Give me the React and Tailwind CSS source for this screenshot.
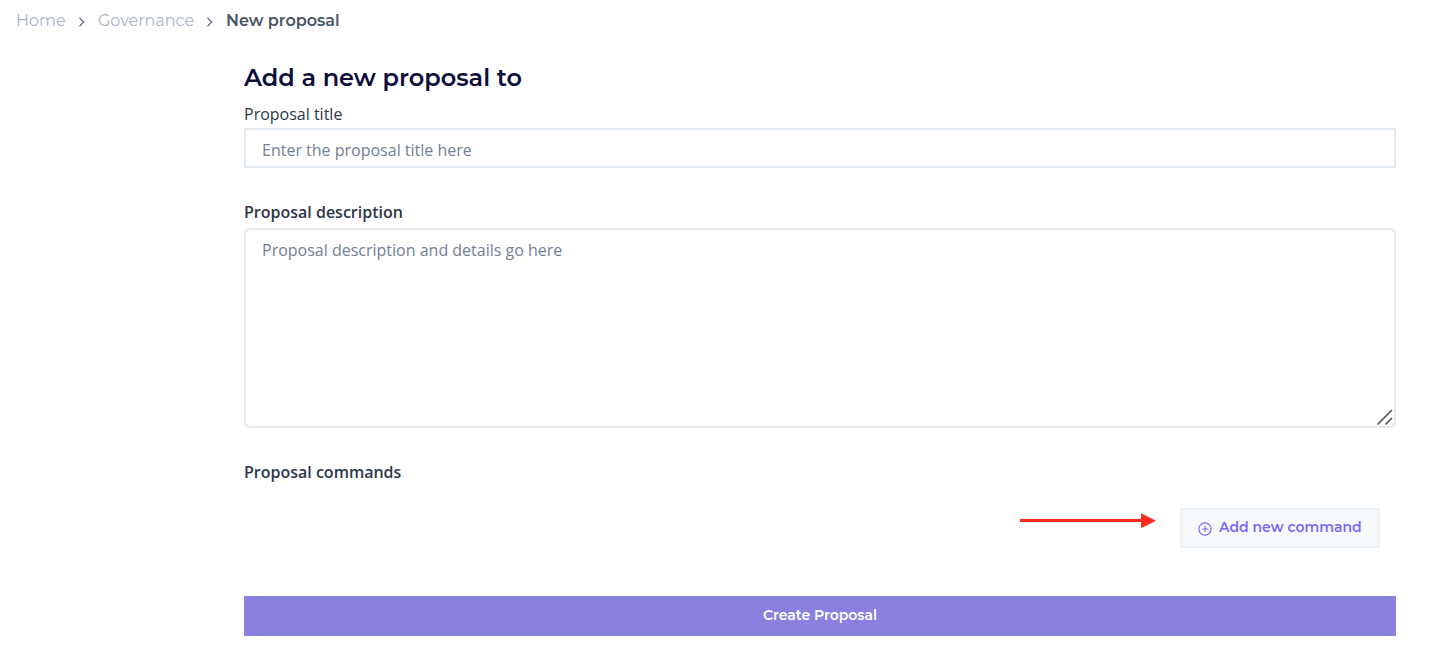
import React from 'react';

function Chevron() {
  return (
    <svg className="mt-0.5 h-3 w-2 shrink-0" viewBox="0 0 8 12" fill="none" stroke="#66738a" strokeWidth="1.4">
      <path d="M1.5 1.8 5.7 6 1.5 10.2" />
    </svg>
  );
}

export default function App() {
  return (
    <div className="h-[668px] w-[1430px] overflow-hidden bg-white font-['Open_Sans',sans-serif] text-base text-[#2d3748]">
      <nav className="flex h-[42px] items-center pl-4 font-['Montserrat','Inter',sans-serif] text-[#a9b6c8]">
        <a className="w-[50px] whitespace-nowrap">Home</a>
        <span className="w-8 pl-3"><Chevron /></span>
        <a className="w-24 whitespace-nowrap">Governance</a>
        <span className="w-8 pl-3"><Chevron /></span>
        <span className="whitespace-nowrap font-semibold text-[#4a5568]">New proposal</span>
      </nav>
      <main className="ml-[244px] flex w-[1152px] flex-col pt-5">
        <h1 className="h-8 whitespace-nowrap font-['Montserrat','Inter',sans-serif] text-2xl font-semibold text-[#0d0e3c]">Add a new proposal to</h1>
        <label className="mt-2 h-[26px] leading-6">Proposal title</label>
        <input className="h-10 rounded-[1px] border-2 border-[#e2e8f0] px-4 pt-1 outline-none placeholder:text-[#718096]" placeholder="Enter the proposal title here" />
        <label className="mt-8 h-7 font-semibold leading-6">Proposal description</label>
        <div className="relative h-[200px]">
          <textarea className="block h-full w-full resize-none rounded-md border-2 border-[#e2e8f0] px-4 py-2 outline-none placeholder:text-[#718096]" placeholder="Proposal description and details go here" />
          <svg className="absolute bottom-0.5 right-0.5 h-[18px] w-[18px]" viewBox="0 0 18 18" fill="none" stroke="#555" strokeWidth="1.7">
            <path d="M1.5 16.5 16 2M9.5 16.5 16 10" />
          </svg>
        </div>
        <h2 className="mt-8 h-6 font-semibold leading-6">Proposal commands</h2>
        <div className="mt-6 flex h-10 justify-end pr-4">
          <svg className="mr-6 mt-[5px] h-4 w-[136px]" viewBox="0 0 136 16">
            <path d="M0 7.5h122" stroke="#fb2b1d" strokeWidth="3" />
            <path d="M121 .3 136 7.8l-15 7.5z" fill="#fb2b1d" />
          </svg>
          <button className="flex h-10 w-[200px] items-center rounded-[2px] border-2 border-[#edf2f7] bg-[#f7fafc] pl-4 font-['Montserrat','Inter',sans-serif] text-sm font-semibold text-[#7a68f5]">
            <svg className="mr-[7px] mt-0.5 h-3.5 w-3.5 shrink-0" viewBox="0 0 14 14" fill="none" stroke="currentColor" strokeWidth="1.2">
              <circle cx="7" cy="7" r="6.1" />
              <path d="M7 4v6M4 7h6" />
            </svg>
            <span className="whitespace-nowrap pb-0.5">Add new command</span>
          </button>
        </div>
        <button className="mt-12 h-10 rounded-[1px] bg-[#8980df] pb-0.5 font-['Montserrat','Inter',sans-serif] text-sm font-semibold text-white">Create Proposal</button>
      </main>
    </div>
  );
}
